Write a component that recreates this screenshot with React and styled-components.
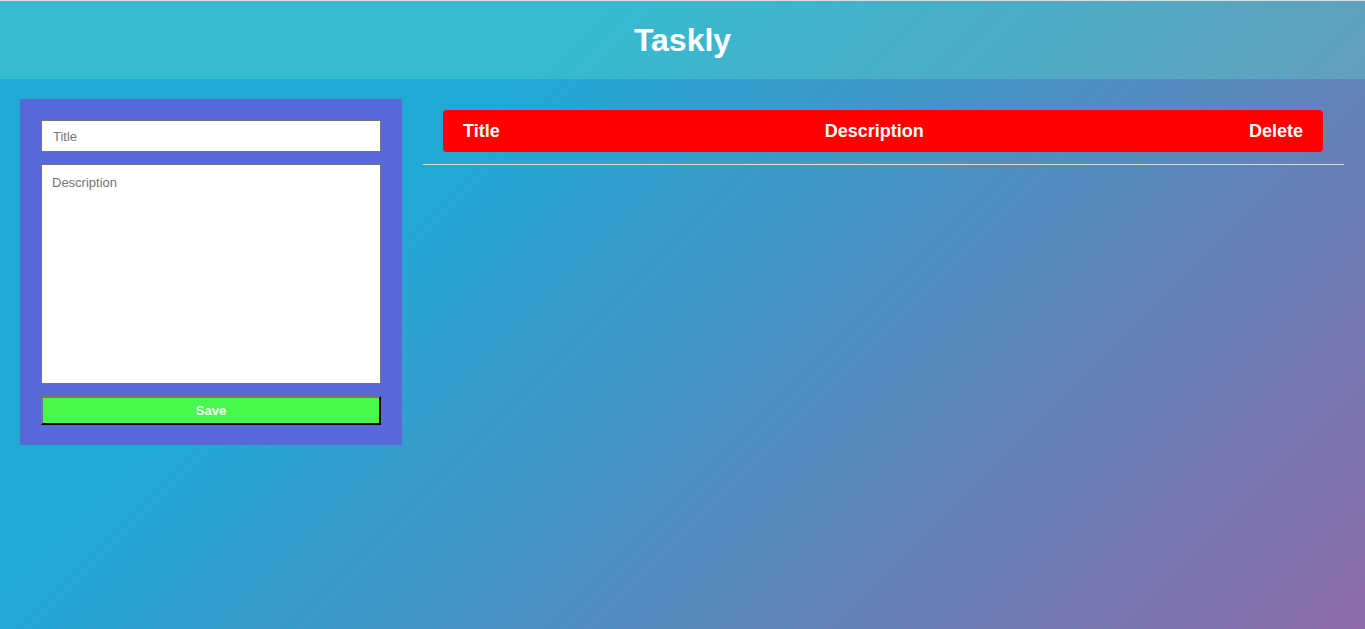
import React from 'react';
import styled, { createGlobalStyle } from 'styled-components';

const GlobalStyle = createGlobalStyle`
  html, body {
    margin: 0;
    padding: 0;
  }
  body {
    font-family: "Liberation Sans", Arial, sans-serif;
    border-top: 1px solid #dcdcdc;
  }
  * {
    box-sizing: border-box;
  }
`

const Page = styled.div`
  min-height: 628px;
  background: linear-gradient(135deg, #21a9d5 30%, #8c6aa7 100%);
  color: #fff;
`

const Header = styled.header`
  height: 78px;
  display: flex;
  align-items: center;
  justify-content: center;
  background: rgba(100, 230, 200, 0.3);
`

const Title = styled.h1`
  margin: 0;
  font-size: 32px;
  font-weight: bold;
  color: #fff;
`

const Main = styled.main`
  display: grid;
  grid-template-columns: 382px 1fr;
  gap: 21px;
  align-items: start;
  padding: 20px 21px 0 20px;
`

const FormBox = styled.form`
  display: flex;
  flex-direction: column;
  gap: 12px;
  padding: 21px 21px 20px;
  background: #5869d9;
`

const Field = styled.input`
  height: 32px;
  padding: 0 11px;
  border: 1px solid #767676;
  background: #fff;
  font-family: inherit;
  font-size: 13px;
  color: #222;
  outline: none;
  &::placeholder {
    color: #757575;
  }
`

const TextArea = styled.textarea`
  height: 220px;
  padding: 10px 10px;
  border: 1px solid #767676;
  background: #fff;
  font-family: inherit;
  font-size: 13px;
  color: #222;
  resize: none;
  outline: none;
  &::placeholder {
    color: #757575;
  }
`

const SaveButton = styled.button`
  height: 29px;
  border: 2px outset #767676;
  border-right-color: #1f1f1f;
  border-bottom-color: #1f1f1f;
  background: #48f84a;
  color: #fff;
  font-family: inherit;
  font-size: 13px;
  font-weight: bold;
  cursor: pointer;
`

const ListArea = styled.section`
  display: flex;
  flex-direction: column;
  padding-top: 11px;
`

const TableHead = styled.div`
  display: flex;
  justify-content: space-between;
  align-items: center;
  height: 42px;
  margin: 0 21px 0 20px;
  padding: 0 20px;
  background: #ff0000;
  border-radius: 4px;
  font-size: 18px;
  font-weight: bold;
`

const Divider = styled.hr`
  margin: 12px 0 0;
  border: 0;
  border-top: 1px solid #dedede;
`

export default function App() {
  const [tasks, setTasks] = React.useState([]);
  const [title, setTitle] = React.useState('');
  const [description, setDescription] = React.useState('');

  function handleSave(e) {
    e.preventDefault();
    if (!title) return;
    setTasks([...tasks, { title, description }]);
    setTitle('');
    setDescription('');
  }

  return (
    <>
      <GlobalStyle />
      <Page>
        <Header>
          <Title>Taskly</Title>
        </Header>
        <Main>
          <FormBox onSubmit={handleSave}>
            <Field
              placeholder="Title"
              value={title}
              onChange={(e) => setTitle(e.target.value)}
            />
            <TextArea
              placeholder="Description"
              value={description}
              onChange={(e) => setDescription(e.target.value)}
            />
            <SaveButton type="submit">Save</SaveButton>
          </FormBox>
          <ListArea>
            <TableHead>
              <span>Title</span>
              <span>Description</span>
              <span>Delete</span>
            </TableHead>
            <Divider />
          </ListArea>
        </Main>
      </Page>
    </>
  );
}
